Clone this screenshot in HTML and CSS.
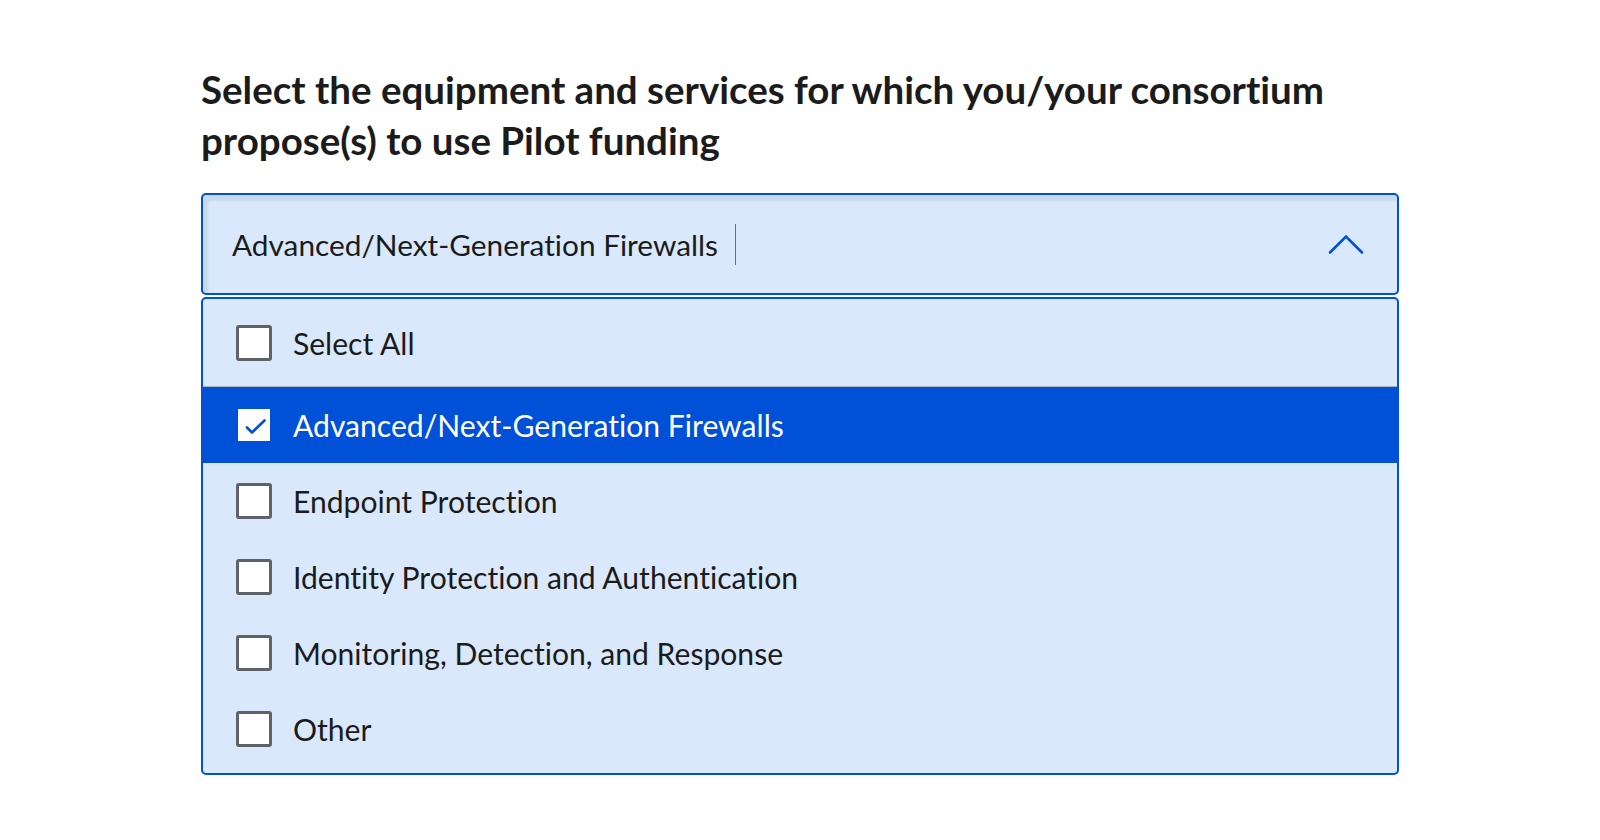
FILE: index.html
```html
<!DOCTYPE html>
<html lang="en">
<head>
<meta charset="utf-8">
<title>Equipment and services</title>
<link rel="stylesheet" href="styles.css">
</head>
<body>
<div class="page">
  <h1 class="question">Select the equipment and services for which you/your consortium propose(s) to use Pilot funding</h1>
  <div class="combo">
    <div class="combo-input">
      <span class="combo-value">Advanced/Next-Generation Firewalls</span>
      <span class="caret"></span>
      <svg class="chevron" width="36" height="22" viewBox="0 0 36 22" aria-hidden="true">
        <polyline points="2,19.5 18,3.5 34,19.5" fill="none" stroke="#0050d8" stroke-width="2.6" stroke-linecap="round" stroke-linejoin="miter"/>
      </svg>
    </div>
    <ul class="options">
      <li class="option option-all"><span class="box"></span><span class="label">Select All</span></li>
      <li class="option selected"><span class="box checked"><svg width="31" height="31" viewBox="0 0 31 31" aria-hidden="true"><polyline points="8,17.5 13,22.5 25.5,10.5" fill="none" stroke="#0050d8" stroke-width="2.6" stroke-linecap="round" stroke-linejoin="round"/></svg></span><span class="label">Advanced/Next-Generation Firewalls</span></li>
      <li class="option"><span class="box"></span><span class="label">Endpoint Protection</span></li>
      <li class="option"><span class="box"></span><span class="label">Identity Protection and Authentication</span></li>
      <li class="option"><span class="box"></span><span class="label">Monitoring, Detection, and Response</span></li>
      <li class="option"><span class="box"></span><span class="label">Other</span></li>
    </ul>
  </div>
</div>
</body>
</html>
```
FILE: styles.css
```css
html, body {
  margin: 0;
  background: #ffffff;
}

body {
  font-family: Lato, "Noto Sans", sans-serif;
  font-variant-ligatures: none;
  color: #1b1b1b;
}

.page {
  width: 1198px;
  padding: 64px 0 0 201px;
}

.question {
  margin: 0 0 27px;
  font-size: 38.5px;
  line-height: 51px;
  font-weight: 700;
  color: #1b1b1b;
}

.combo-input {
  box-sizing: border-box;
  height: 102px;
  display: flex;
  align-items: center;
  padding: 0 33px 0 29px;
  border: 2px solid #0050d8;
  border-radius: 5px;
  background: #d9e8fb;
  box-shadow: inset 6px 7px 2px -1px #c7d9ef;
  font-size: 29.8px;
}

.combo-value {
  white-space: nowrap;
}

.caret {
  width: 1px;
  height: 41px;
  margin-left: 17px;
  background: #6f6f6f;
}

.chevron {
  margin-left: auto;
  display: block;
}

.options {
  list-style: none;
  margin: 2px 0 0;
  padding: 0 0 6px;
  border: 2px solid #0050d8;
  border-radius: 5px;
  background: #d9e8fb;
  overflow: hidden;
  font-size: 30.1px;
}

.option {
  display: flex;
  align-items: center;
  height: 76px;
  padding-left: 33px;
}

.option-all {
  height: 87px;
  border-bottom: 1px solid #a9b3bd;
}

.option.selected {
  background: #0050d8;
  color: #ffffff;
}

.box {
  box-sizing: border-box;
  flex: none;
  width: 36px;
  height: 36px;
  margin-right: 21px;
  border: 3px solid #5f6266;
  border-radius: 3px;
  background: #ffffff;
}

.box.checked {
  border: 2.5px solid #0050d8;
  border-radius: 0;
  display: flex;
  align-items: center;
  justify-content: center;
}

.box.checked svg {
  display: block;
}

.label {
  white-space: nowrap;
}
```
